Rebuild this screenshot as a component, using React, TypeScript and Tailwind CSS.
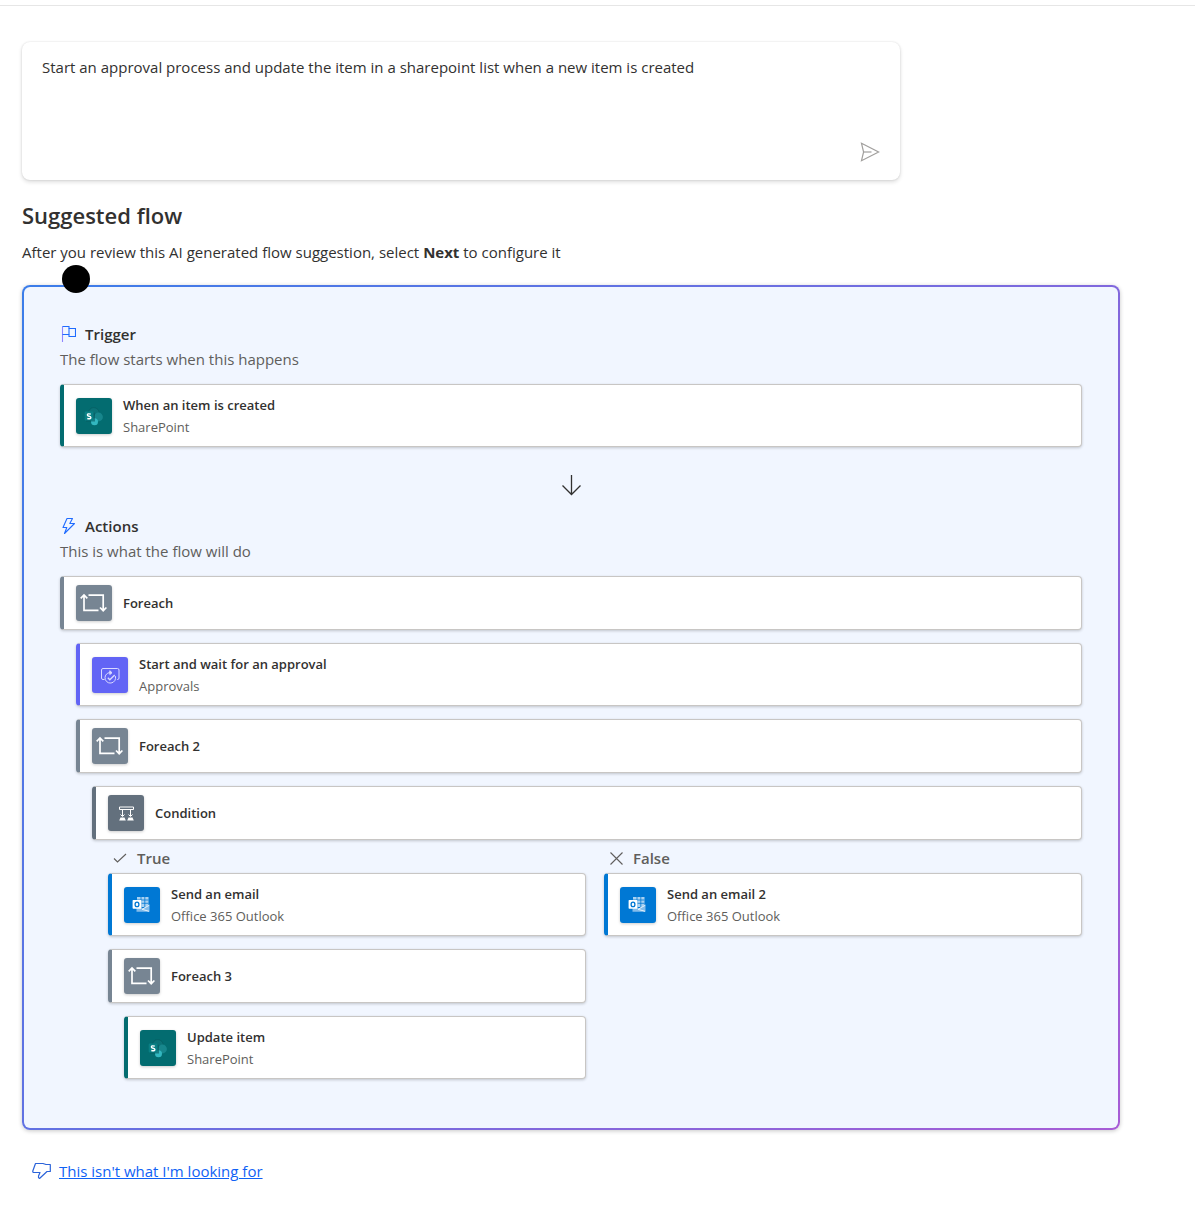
import type { ReactNode } from "react";

function SendIcon() {
  return (
    <svg width="20" height="20" viewBox="0 0 20 20" fill="none" stroke="#a19f9d" strokeWidth="1.2" strokeLinejoin="miter">
      <path d="M1.500 1.300 18.600 10 1.500 18.700 3.600 10Z" />
      <path d="M3.600 10H11.500" />
    </svg>
  );
}

function FlagIcon() {
  return (
    <svg width="16" height="18" viewBox="-1 0 16 18" fill="none" stroke="#1f6bff" strokeWidth="1.100">
      <path d="M1.500 17V1.500" stroke="#8f86ff" />
      <path d="M1.500 1.500H8V3.500H14.500V11.500H8V9.500H1.500" />
      <path d="M8 3.500V9.500" />
    </svg>
  );
}

function BoltIcon() {
  return (
    <svg width="16" height="18" viewBox="-1 0 16 18" fill="none" stroke="#1f6bff" strokeWidth="1.100" strokeLinejoin="round">
      <path d="M6 1.500H11.500L8.800 6.500H13.500L3.500 16.500L5.800 10.500H2Z" />
    </svg>
  );
}

function DownArrowIcon() {
  return (
    <svg width="22" height="22" viewBox="0 0 22 22" fill="none" stroke="#323130" strokeWidth="1.300">
      <path d="M11.500 1V20.500M2.500 11.500 11.500 20.500 20.500 11.500" />
    </svg>
  );
}

function LoopIcon() {
  return (
    <svg width="36" height="36" viewBox="0 0 36 36" fill="none" stroke="#fff" strokeWidth="1.700">
      <path d="M12.500 10.200H27.200V25.500M24 22.500 27.200 25.700 30.400 22.500" />
      <path d="M22.500 25.300H8V10M4.700 13.300 8 10 11.300 13.300" />
    </svg>
  );
}

function ApprovalIcon() {
  return (
    <svg width="36" height="36" viewBox="0 0 36 36" fill="none" stroke="#d9d9ff" strokeWidth="1">
      <path d="M12.500 22.500H11Q9.500 22.500 9.500 21V13Q9.500 11.500 11 11.500H25.500Q27 11.500 27 13V21Q27 22.500 25.500 22.500H25" />
      <path d="M19.800 15.700A5.300 5.300 0 1 0 23.300 19" />
      <path d="M17.800 13.700 20 15.700 17.800 17.500Z" fill="#d9d9ff" />
      <path d="M15.800 20.800 17.800 22.800 22.700 18" strokeWidth="1.300" />
    </svg>
  );
}

function ConditionIcon() {
  return (
    <svg width="36" height="36" viewBox="0 0 36 36" fill="none" stroke="#fff" strokeWidth="1">
      <path d="M11.500 12H25.500V14.500H11.500Z" />
      <path d="M14.500 14.500V21M22.500 14.500V21" />
      <path d="M12.500 19.500 14.500 21.500 16.500 19.500M20.500 19.500 22.500 21.500 24.500 19.500" />
      <path d="M12.500 22.500H16.500L17.800 25.500H11.200ZM20.500 22.500H24.500L25.800 25.500H19.200Z" fill="#fff" stroke="none" />
    </svg>
  );
}

function OutlookIcon() {
  return (
    <svg width="36" height="36" viewBox="0 0 36 36" fill="none">
      <path d="M13 10H24.500V20H13Z" fill="#a9d1f1" />
      <path d="M17 10V20M20.800 10V20M13 13H24.500M13 16.300H24.500" stroke="#0078d4" strokeWidth="0.800" />
      <path d="M12.500 18 19 21.500 25.500 17.500V24.800H12.500Z" fill="#84bcea" />
      <path d="M25.200 18.300 18 22.300 25 24.300" stroke="#e6f2fb" strokeWidth="1" />
      <rect x="8.600" y="13" width="8.800" height="8.800" rx="0.700" fill="#fff" />
      <ellipse cx="13" cy="17.400" rx="1.900" ry="2.200" stroke="#0078d4" strokeWidth="1.300" />
    </svg>
  );
}

function SharePointIcon() {
  return (
    <svg width="36" height="36" viewBox="0 0 36 36">
      <circle cx="17.800" cy="15" r="5.400" fill="#0b7277" stroke="#07575b" strokeWidth="0.500" />
      <circle cx="22.500" cy="19" r="4.400" fill="#17868c" />
      <circle cx="18.500" cy="23.700" r="3.500" fill="#33b7c0" />
      <path d="M10 14.500H18Q19 14.500 19 15.500V23.500H10Z" fill="#07575b" opacity="0.600" />
      <path d="M9.700 13.500H16.500Q17.500 13.500 17.500 14.500V22.500H9.700Q8.700 22.500 8.700 21.500V14.500Q8.700 13.500 9.700 13.500Z" fill="#0a8085" />
      <path d="M14.800 16.200Q11.400 15.200 11.400 17Q11.400 18 13.100 18.300Q14.900 18.700 14.900 19.700Q14.800 21.400 11.300 20.500" fill="none" stroke="#fff" strokeWidth="1.400" />
    </svg>
  );
}

function CheckIcon() {
  return (
    <svg width="14" height="14" viewBox="0 0 14 14" fill="none" stroke="#605e5c" strokeWidth="1.100">
      <path d="M1 6.500 4.500 10 13 2" />
    </svg>
  );
}

function CrossIcon() {
  return (
    <svg width="14" height="14" viewBox="0 0 14 14" fill="none" stroke="#605e5c" strokeWidth="1.100">
      <path d="M1.500 .500 13.500 12.500M13.500 .500 1.500 12.500" />
    </svg>
  );
}

function ThumbDownIcon() {
  return (
    <svg width="20" height="18" viewBox="-1 0 20 18" fill="none" stroke="#2b63d9" strokeWidth="1.200" strokeLinejoin="round">
      <path d="M3.500 1.500H11L14 2.500H18.300V9.500H15L7.500 16.500Q6 16 6.500 14L8 10.500H2Q.500 10.500 .800 9Z" />
    </svg>
  );
}

const kinds = {
  sharepoint: { bar: "border-l-[#036c70]", tile: "bg-[#036c70]", icon: <SharePointIcon /> },
  loop: { bar: "border-l-[#778593]", tile: "bg-[#778593]", icon: <LoopIcon /> },
  approval: { bar: "border-l-[#6264f5]", tile: "bg-[#6264f5]", icon: <ApprovalIcon /> },
  condition: { bar: "border-l-[#63707d]", tile: "bg-[#63707d]", icon: <ConditionIcon /> },
  outlook: { bar: "border-l-[#0078d4]", tile: "bg-[#0078d4]", icon: <OutlookIcon /> },
};

function Step({ kind, title, service }: { kind: keyof typeof kinds; title: string; service?: string }) {
  const k = kinds[kind];
  return (
    <div
      className={`flex items-center gap-[11px] rounded border border-l-4 border-[#c8c6c4] bg-white pl-3 shadow-[0_1px_3px_rgba(0,0,0,0.2)] ${k.bar} ${service ? "min-h-[63px]" : "min-h-[54px]"}`}
    >
      <div className={`size-9 shrink-0 rounded-[3px] shadow-[0_1px_3px_rgba(0,0,0,0.2)] ${k.tile}`}>{k.icon}</div>
      <div className="text-[13px] leading-[22px]">
        <div className="font-semibold text-[#323130]">{title}</div>
        {service && <div className="text-[#605e5c]">{service}</div>}
      </div>
    </div>
  );
}

function SectionHeading({ icon, title, subtitle }: { icon: ReactNode; title: string; subtitle: string }) {
  return (
    <div className="mb-3 text-[15px]">
      <h3 className="flex items-center gap-[9px] leading-[26px] font-semibold text-[#323130]">
        {icon}
        {title}
      </h3>
      <p className="leading-[25px] text-[#605e5c]">{subtitle}</p>
    </div>
  );
}

function BranchLabel({ icon, children }: { icon: ReactNode; children: ReactNode }) {
  return (
    <div className="flex h-[33px] items-center gap-[10px] pt-1 pl-[5px] text-[15px] font-semibold text-[#605e5c]">
      {icon}
      {children}
    </div>
  );
}

export default function App() {
  return (
    <main className="mt-[5px] border-t border-[#e6e6e6] bg-white pt-9 pr-[75px] pb-7 pl-[22px] font-['Open_Sans','Noto_Sans',sans-serif] text-[15px] text-[#323130]">
      <form className="flex min-h-[138px] w-4/5 flex-col rounded-lg bg-white px-5 pt-3 pb-[18px] shadow-[0_0_2px_rgba(0,0,0,0.12),0_2px_4px_rgba(0,0,0,0.14)]">
        <textarea
          aria-label="Describe your flow"
          className="h-[88px] w-full resize-none leading-[26px] outline-none"
          defaultValue="Start an approval process and update the item in a sharepoint list when a new item is created"
        />
        <button type="button" aria-label="Send" className="self-end">
          <SendIcon />
        </button>
      </form>

      <h2 className="mt-[19px] text-[22px] leading-8 font-semibold">Suggested flow</h2>
      <p className="mt-2 leading-[26px]">
        After you review this AI generated flow suggestion, select <strong className="font-bold">Next</strong> to configure it
      </p>

      <section className="relative mt-5 rounded-lg bg-[linear-gradient(125deg,#3b7de9,#a75cd6)] p-0.5 shadow-[0_1px_4px_rgba(0,0,0,0.22)]">
        <span className="absolute -top-5 left-10 size-7 rounded-full bg-black" />
        <div className="rounded-md bg-[#f1f6ff] px-9 pt-[34px] pb-[49px]">
          <SectionHeading icon={<FlagIcon />} title="Trigger" subtitle="The flow starts when this happens" />
          <Step kind="sharepoint" title="When an item is created" service="SharePoint" />
          <div className="flex h-[66px] items-center justify-center pt-[10px]">
            <DownArrowIcon />
          </div>
          <SectionHeading icon={<BoltIcon />} title="Actions" subtitle="This is what the flow will do" />
          <div className="flex flex-col gap-[13px]">
            <Step kind="loop" title="Foreach" />
            <div className="flex flex-col gap-[13px] pl-4">
              <Step kind="approval" title="Start and wait for an approval" service="Approvals" />
              <Step kind="loop" title="Foreach 2" />
              <div className="pl-4">
                <Step kind="condition" title="Condition" />
                <div className="grid grid-cols-2 gap-[18px] pl-4">
                  <div>
                    <BranchLabel icon={<CheckIcon />}>True</BranchLabel>
                    <div className="flex flex-col gap-[13px]">
                      <Step kind="outlook" title="Send an email" service="Office 365 Outlook" />
                      <Step kind="loop" title="Foreach 3" />
                      <div className="pl-4">
                        <Step kind="sharepoint" title="Update item" service="SharePoint" />
                      </div>
                    </div>
                  </div>
                  <div>
                    <BranchLabel icon={<CrossIcon />}>False</BranchLabel>
                    <Step kind="outlook" title="Send an email 2" service="Office 365 Outlook" />
                  </div>
                </div>
              </div>
            </div>
          </div>
        </div>
      </section>

      <a href="#feedback" className="mt-7 ml-[9px] inline-flex items-center gap-2 leading-[26px] text-[#0f62f5]">
        <ThumbDownIcon />
        <span className="underline">This isn't what I'm looking for</span>
      </a>
    </main>
  );
}
